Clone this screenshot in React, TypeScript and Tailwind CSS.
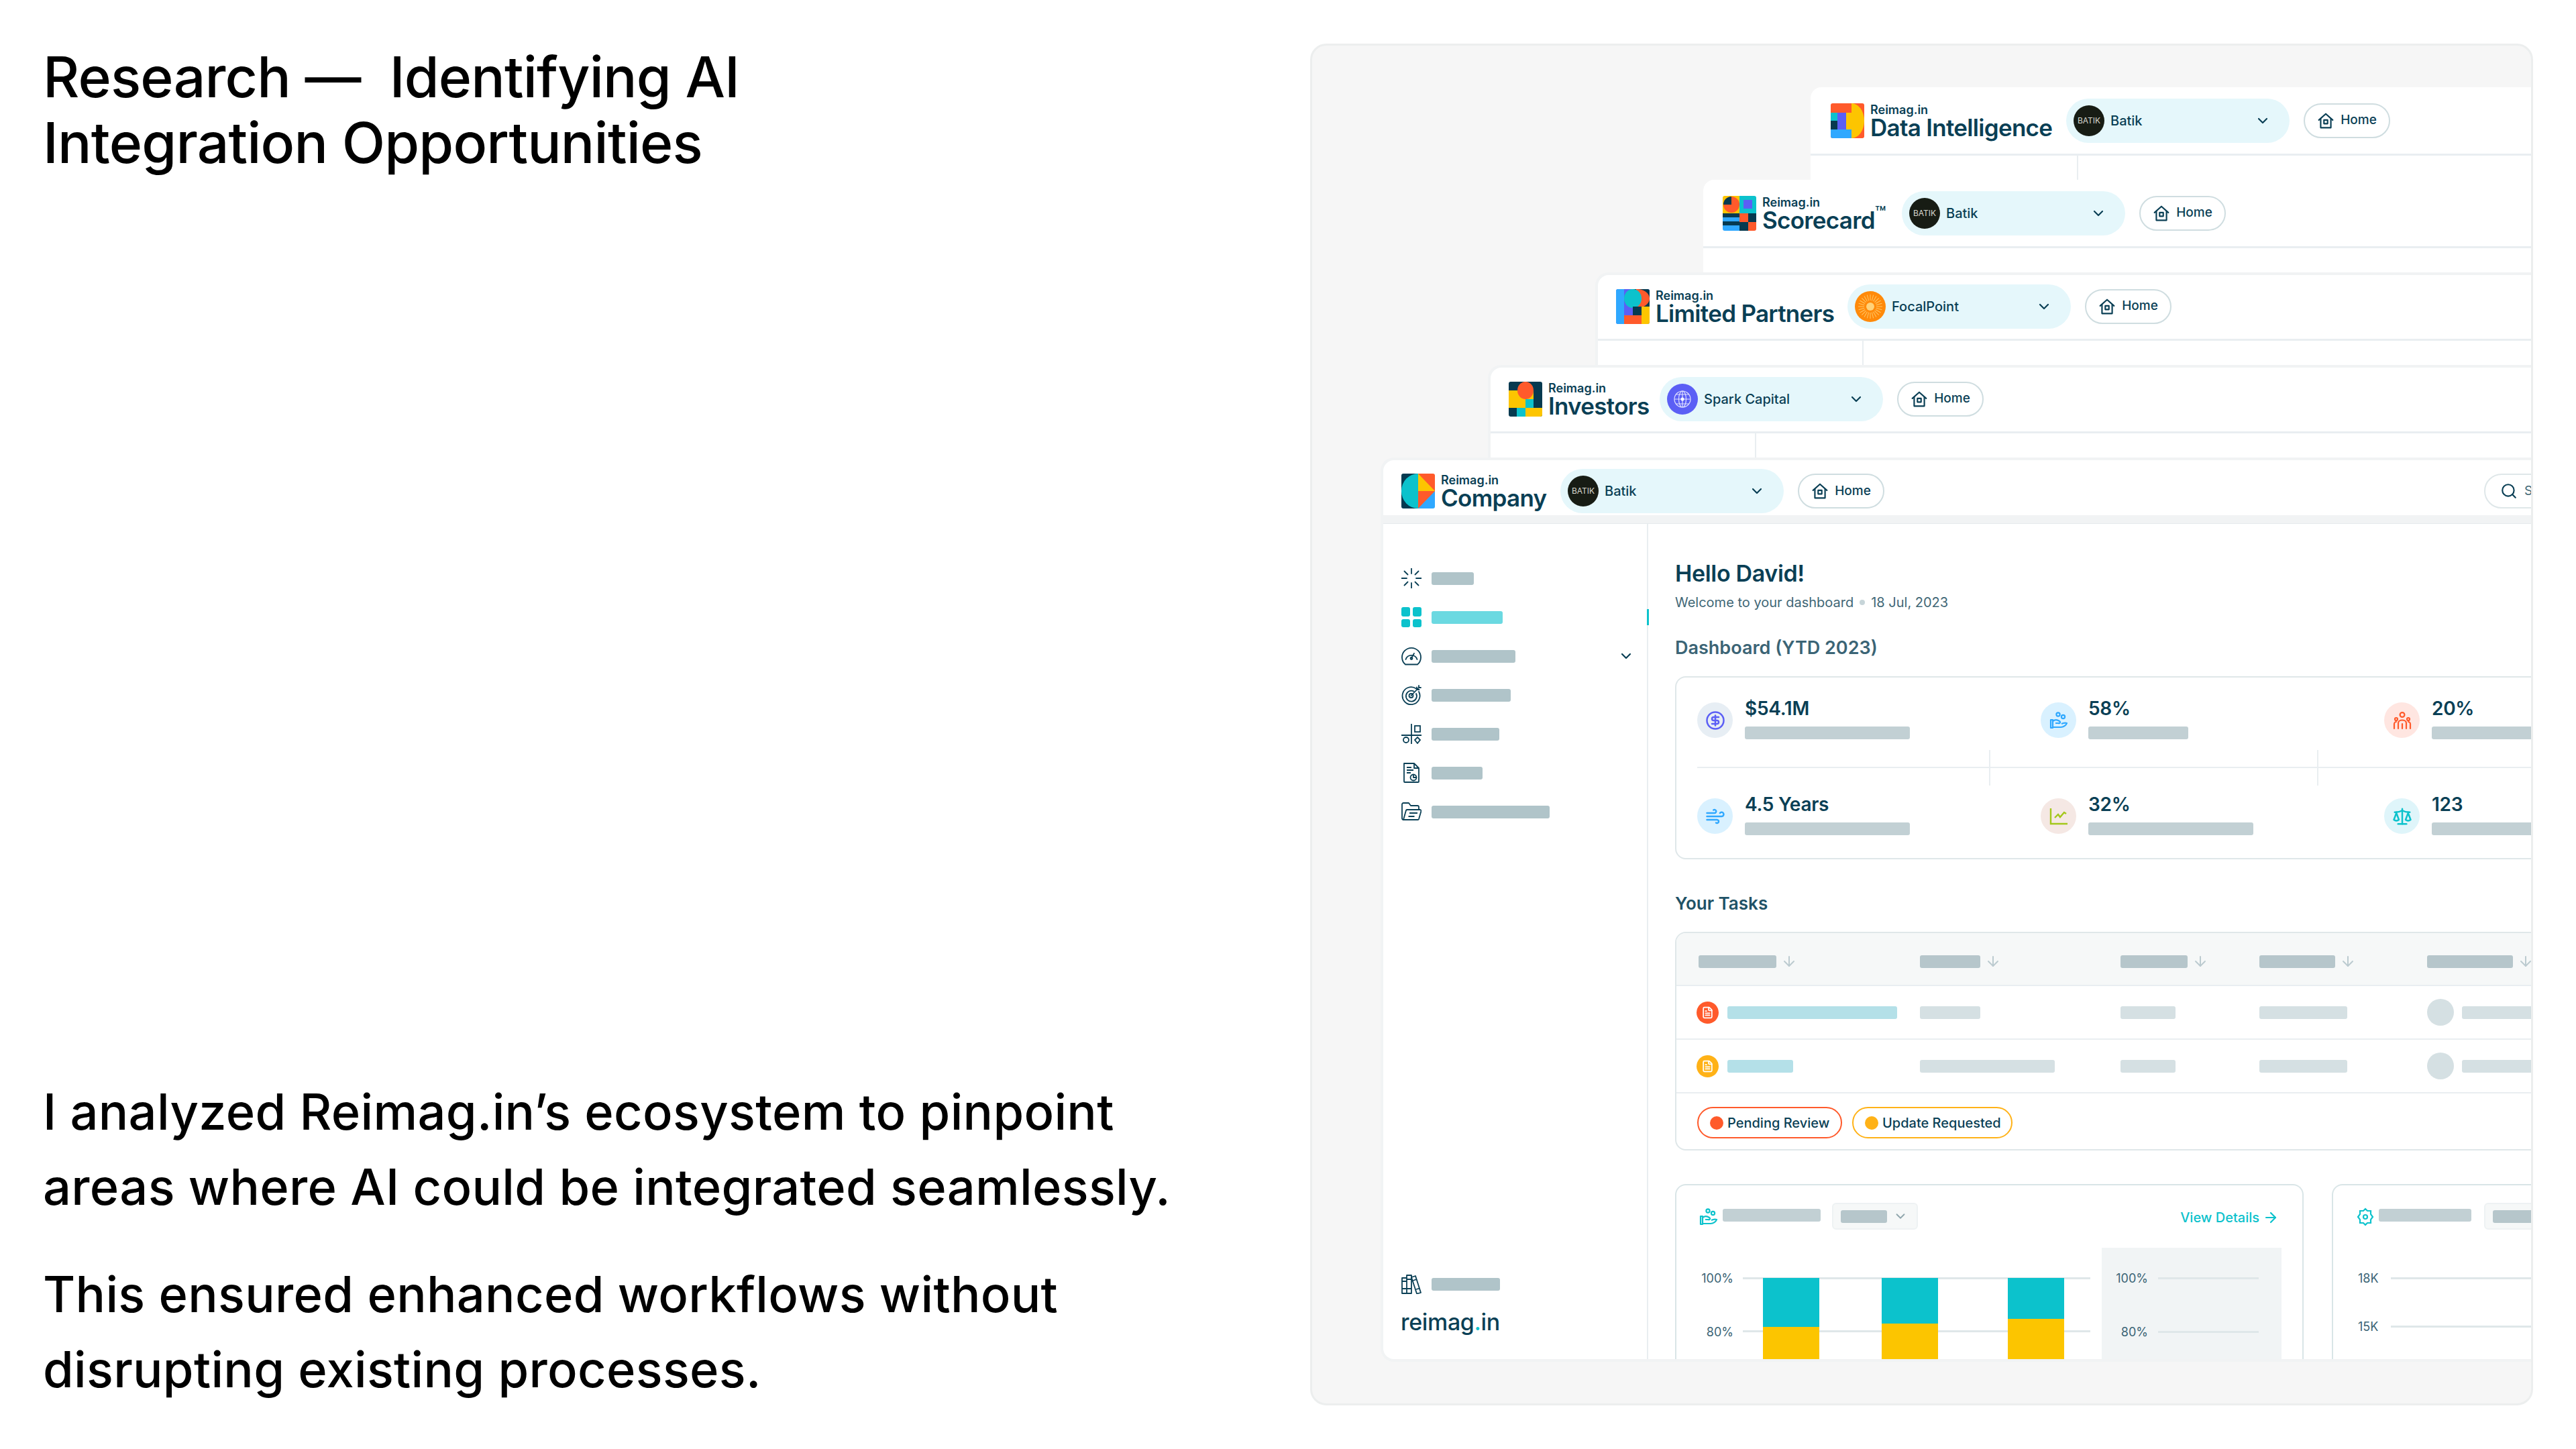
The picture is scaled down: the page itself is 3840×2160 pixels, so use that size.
import {
  ArrowDown,
  ArrowRight,
  ChevronDown,
  CircleDollarSign,
  FileText,
  Scale,
  Search,
  Wind,
} from 'lucide-react';
import type { ReactNode } from 'react';

function HomeIcon() {
  return (
    <svg viewBox="0 0 24 24" className="w-[26px] h-[26px]" fill="none" stroke="#0a3f55" strokeWidth="2" strokeLinejoin="round">
      <path d="M2.5 11 12 2.5 21.5 11" strokeLinecap="round" />
      <path d="M5 9v12.5h14V9" />
      <rect x="9.5" y="11" width="5" height="5" />
    </svg>
  );
}

function LogoData() {
  return (
    <svg viewBox="0 0 50 52" className="w-[50px] h-[52px] shrink-0 rounded-[3px]">
      <rect width="50" height="52" fill="#ff5a2b" />
      <rect x="0" y="14" width="10" height="12" fill="#0cc2cc" />
      <rect x="0" y="26" width="10" height="13" fill="#063a50" />
      <rect x="10" y="14" width="13" height="25" fill="#5b5ff5" />
      <rect x="0" y="39" width="31" height="13" fill="#2fa8ff" />
      <path d="M31 0a19 26 0 0 1 0 52z" fill="#fdc500" />
      <rect x="23" y="14" width="8" height="25" fill="#fdc500" />
    </svg>
  );
}

function LogoScorecard() {
  return (
    <svg viewBox="0 0 50 52" className="w-[50px] h-[52px] shrink-0 rounded-[3px]">
      <rect width="25" height="26" fill="#fdc500" />
      <circle cx="13" cy="13" r="12" fill="#ff5a2b" />
      <path d="M1 13A12 12 0 0 1 13 1v12z" fill="#063a50" />
      <rect x="25" width="25" height="26" fill="#0cc2cc" />
      <rect x="31" y="6" width="13" height="13" fill="#5b5ff5" />
      <rect y="26" width="25" height="6" fill="#063a50" />
      <rect y="32" width="25" height="6" fill="#2fa8ff" />
      <rect y="38" width="25" height="6" fill="#063a50" />
      <rect y="44" width="25" height="8" fill="#2fa8ff" />
      <rect x="25" y="26" width="13" height="13" fill="#ff5a2b" />
      <rect x="38" y="26" width="12" height="13" fill="#063a50" />
      <rect x="25" y="39" width="13" height="13" fill="#063a50" />
      <rect x="38" y="39" width="12" height="13" fill="#ff5a2b" />
    </svg>
  );
}

function LogoPartners() {
  return (
    <svg viewBox="0 0 50 52" className="w-[50px] h-[52px] shrink-0 rounded-[3px]">
      <rect width="50" height="52" fill="#5b5ff5" />
      <rect width="12" height="52" fill="#2fa8ff" />
      <path d="M25 0h25v26H25z" fill="#063a50" />
      <path d="M30 0a19 14 0 0 1 20 14 19 14 0 0 1-20 14z" fill="#ff5a2b" />
      <ellipse cx="25" cy="14" rx="13" ry="14" fill="#0cc2cc" />
      <rect x="25" y="26" width="13" height="13" fill="#063a50" />
      <rect x="12" y="39" width="26" height="13" fill="#ff5a2b" />
      <rect x="38" y="26" width="12" height="26" fill="#fdc500" />
    </svg>
  );
}

function LogoInvestors() {
  return (
    <svg viewBox="0 0 50 52" className="w-[50px] h-[52px] shrink-0 rounded-[3px]">
      <rect width="50" height="52" fill="#063a50" />
      <rect y="13" width="25" height="26" fill="#fdc500" />
      <rect x="25" y="13" width="12" height="26" fill="#fdc500" />
      <rect x="25" y="26" width="12" height="13" fill="#0cc2cc" />
      <ellipse cx="25" cy="13" rx="12" ry="13" fill="#ff5a2b" />
      <rect x="12" y="39" width="13" height="13" fill="#0cc2cc" />
      <rect x="25" y="39" width="25" height="13" fill="#fdc500" />
    </svg>
  );
}

function LogoCompany() {
  return (
    <svg viewBox="0 0 50 52" className="w-[50px] h-[52px] shrink-0 rounded-[3px]">
      <rect width="25" height="52" fill="#063a50" />
      <path d="M25 0a25 26 0 0 0 0 52z" fill="#0cc2cc" />
      <rect x="25" width="25" height="26" fill="#ff5a2b" />
      <path d="M25 0l25 26H25z" fill="#fdc500" />
      <rect x="25" y="26" width="25" height="26" fill="#2fa8ff" />
      <path d="M25 26h25L25 52z" fill="#ff5a2b" />
    </svg>
  );
}

function BatikAvatar() {
  return (
    <div className="w-[46px] h-[46px] shrink-0 rounded-full bg-[#171c14] flex items-center justify-center text-[12px] text-[#d8d8d0]">
      BATIK
    </div>
  );
}

function FocalAvatar() {
  const rays = Array.from({ length: 24 }, (_, i) => (i * 360) / 24);
  return (
    <svg viewBox="0 0 46 46" className="w-[46px] h-[46px] shrink-0">
      <circle cx="23" cy="23" r="23" fill="#ff8a0a" />
      {rays.map((a) => (
        <line key={a} x1="23" y1="14" x2="23" y2="5" stroke="#ffc766" strokeWidth="1" transform={`rotate(${a} 23 23)`} />
      ))}
      <circle cx="23" cy="23" r="6" fill="#ffd27a" />
    </svg>
  );
}

function SparkAvatar() {
  return (
    <svg viewBox="0 0 46 46" className="w-[46px] h-[46px] shrink-0" fill="none" stroke="#dfe0ff" strokeWidth="1.2">
      <circle cx="23" cy="23" r="23" fill="#5b5ff5" stroke="none" />
      <circle cx="23" cy="23" r="12" />
      <ellipse cx="23" cy="23" rx="5.5" ry="12" />
      <path d="M11 23h24M13 16h20M13 30h20M23 11v24" />
      <circle cx="23" cy="23" r="2.5" fill="#ffffff" stroke="none" />
    </svg>
  );
}

function Header({
  logo,
  title,
  titleClass,
  avatar,
  name,
  children,
}: {
  logo: ReactNode;
  title: ReactNode;
  titleClass: string;
  avatar: ReactNode;
  name: string;
  children?: ReactNode;
}) {
  return (
    <div className="flex items-center">
      {logo}
      <div className={`ml-[9px] shrink-0 whitespace-nowrap text-[#0a3f55] ${titleClass}`}>
        <div className="text-[18px] leading-[21px] font-semibold">Reimag.in</div>
        <div className="text-[35px] leading-[33px] font-semibold tracking-[-0.02em]">{title}</div>
      </div>
      <div className="ml-[20px] w-[333px] h-[66px] shrink-0 rounded-full bg-[#e5f7fb] flex items-center pl-[11px] pr-[28px]">
        {avatar}
        <span className="ml-[9px] text-[20px] font-medium text-[#0a3f55]">{name}</span>
        <ChevronDown className="ml-auto w-[24px] h-[24px] text-[#0a3f55]" strokeWidth={2.2} />
      </div>
      <div className="ml-[21px] w-[129px] h-[52px] shrink-0 rounded-full border-2 border-[#cfdde0] flex items-center justify-center gap-[9px]">
        <HomeIcon />
        <span className="text-[19px] font-medium text-[#0a3f55]">Home</span>
      </div>
      {children}
    </div>
  );
}

function Bar({ className }: { className: string }) {
  return <div className={`h-[19px] rounded-[3px] shrink-0 ${className}`} />;
}

function SunIcon() {
  return (
    <svg viewBox="0 0 30 30" className="w-[30px] h-[30px]" fill="none" stroke="#0a3f55" strokeWidth="1.8" strokeLinecap="round">
      <path d="M15 0v8M15 22v8M0 15h8M22 15h8M4.500 4.500l5 5M20.500 20.500l5 5M25.500 4.500l-5 5M9.500 20.500l-5 5" />
    </svg>
  );
}

function GridIcon() {
  return (
    <svg viewBox="0 0 30 30" className="w-[30px] h-[30px]" fill="#0cc2cc">
      <rect x="0" y="0" width="13" height="14" rx="3" />
      <rect x="17" y="0" width="13" height="14" rx="3" />
      <rect x="0" y="18" width="13" height="12" rx="3" />
      <rect x="17" y="18" width="13" height="12" rx="3" />
    </svg>
  );
}

function GaugeIcon() {
  return (
    <svg viewBox="0 0 30 30" className="w-[30px] h-[30px]" fill="none" stroke="#0a3f55" strokeWidth="1.8" strokeLinecap="round">
      <path d="M6 27.500A14 14 0 1 1 24 27.500z" strokeLinejoin="round" />
      <path d="M6.500 20A9 9 0 0 1 23.500 20" />
      <path d="M15 18l4-7" />
      <circle cx="15" cy="18.500" r="1.500" />
    </svg>
  );
}

function TargetIcon() {
  return (
    <svg viewBox="0 0 30 30" className="w-[30px] h-[30px]" fill="none" stroke="#0a3f55" strokeWidth="1.8" strokeLinecap="round">
      <path d="M22 5.500A13 13 0 1 0 26 10" />
      <path d="M18.500 9.500A8 8 0 1 0 22 13" />
      <circle cx="14.500" cy="16" r="3" />
      <path d="M14.500 16 26 4M23 3.500v3.500h3.500M26 1v3h3" />
    </svg>
  );
}

function ShapesIcon() {
  return (
    <svg viewBox="0 0 30 30" className="w-[30px] h-[30px]" fill="none" stroke="#0a3f55" strokeWidth="1.8">
      <path d="M0 17h30M15 0v30" />
      <rect x="20" y="3" width="8" height="9" />
      <circle cx="7" cy="24" r="4" />
      <path d="M24 20l4 4-4 5-4-5z" />
    </svg>
  );
}

function ReportIcon() {
  return (
    <svg viewBox="0 0 30 30" className="w-[30px] h-[30px]" fill="none" stroke="#0a3f55" strokeWidth="1.8" strokeLinejoin="round">
      <path d="M4 1h15l7 7v20a1 1 0 0 1-1 1H5a1 1 0 0 1-1-1z" />
      <path d="M19 1v7h7M8 7h7M8 11h10M8 15h6" />
      <circle cx="18" cy="22" r="4.500" />
      <path d="M18 17.500V22h4.500" />
    </svg>
  );
}

function FolderIcon() {
  return (
    <svg viewBox="0 0 30 30" className="w-[30px] h-[30px]" fill="none" stroke="#0a3f55" strokeWidth="1.8" strokeLinejoin="round">
      <path d="M3 27a2 2 0 0 1-2-2V4a2 2 0 0 1 2-2h8l3 4h10a2 2 0 0 1 2 2v4" />
      <path d="M3 27l4-14a2 2 0 0 1 2-1h19a2 2 0 0 1 1.500 2L26 26a1.500 1.500 0 0 1-1.500 1z" />
      <path d="M12 17h12M10.500 22h9" />
    </svg>
  );
}

function BooksIcon() {
  return (
    <svg viewBox="0 0 30 30" className="w-[30px] h-[30px]" fill="none" stroke="#0a3f55" strokeWidth="1.8" strokeLinejoin="round">
      <path d="M1 6h7v23H1zM8 2h7v27H8zM1 11h7M1 22h7M8 8h7M8 22h7" />
      <path d="M15 5l6-2 8 25-6 1.500z" />
      <path d="M17 10l6-2M22 23l5-1.500" />
    </svg>
  );
}

const sideItems = [
  { icon: <SunIcon />, bar: 'w-[63px] bg-[#b0c4c9]' },
  { icon: <GridIcon />, bar: 'w-[106px] bg-[#6bd9e1]', active: true },
  { icon: <GaugeIcon />, bar: 'w-[125px] bg-[#b0c4c9]', chevron: true },
  { icon: <TargetIcon />, bar: 'w-[118px] bg-[#b0c4c9]' },
  { icon: <ShapesIcon />, bar: 'w-[101px] bg-[#b0c4c9]' },
  { icon: <ReportIcon />, bar: 'w-[76px] bg-[#b0c4c9]' },
  { icon: <FolderIcon />, bar: 'w-[176px] bg-[#b0c4c9]' },
];

function Sidebar() {
  return (
    <div className="w-[395px] shrink-0 border-r-2 border-[#e9eef1] flex flex-col pl-[27px] pt-[52px] pb-[35px]">
      {sideItems.map((item) => (
        <div key={item.bar} className="relative h-[58px] flex items-center gap-[15px]">
          <div className="w-[30px] h-[30px] shrink-0">{item.icon}</div>
          <Bar className={item.bar} />
          {item.chevron && <ChevronDown className="absolute left-[323px] w-[24px] h-[24px] text-[#0a3f55]" strokeWidth={2.2} />}
          {item.active && <div className="absolute left-[366px] w-[3px] h-[24px] bg-[#0cc2cc]" />}
        </div>
      ))}
      <div className="mt-auto flex items-center gap-[15px]">
        <BooksIcon />
        <Bar className="w-[102px] bg-[#b0c4c9]" />
      </div>
      <div className="mt-[22px] -ml-[1px] text-[34px] leading-[40px] font-medium text-[#0a3f55] tracking-[-0.01em]">
        reimag<span className="text-[#0cc2cc]">.</span>in
      </div>
    </div>
  );
}

function HandIcon() {
  return (
    <svg viewBox="0 0 28 28" className="w-[28px] h-[28px]" fill="none" stroke="#2fa8ff" strokeWidth="2.2" strokeLinejoin="round">
      <circle cx="13" cy="5" r="2.600" />
      <circle cx="20.500" cy="8.500" r="2.600" />
      <path d="M2 13h3v12H2zM5 15c4-3 7-2 10 0 2 1 1 4-2 3h-4M5 24h12c4 0 8-3 9-6-3-1-6 0-8 1" />
    </svg>
  );
}

function PeopleIcon() {
  return (
    <svg viewBox="0 0 28 28" className="w-[28px] h-[28px]" fill="none" stroke="#ff5a2b" strokeWidth="2.2" strokeLinecap="round">
      <circle cx="14" cy="5.500" r="3.400" />
      <circle cx="5" cy="12" r="2" />
      <circle cx="23" cy="12" r="2" />
      <path d="M8 26v-8c0-6 12-6 12 0v8M14 19v7M2 26v-7c0-2 2-3 3-3M26 26v-7c0-2-2-3-3-3" />
    </svg>
  );
}

function GrowthIcon() {
  return (
    <svg viewBox="0 0 28 28" className="w-[28px] h-[28px]" fill="none" stroke="#a3c71a" strokeWidth="2.400">
      <path d="M2 2v23h25" />
      <path d="M8 16l5-5 3 4 6-7 3 2" />
    </svg>
  );
}

function Stat({ circle, icon, value, bar }: { circle: string; icon: ReactNode; value: string; bar: string }) {
  return (
    <div className="w-[512px] shrink-0 flex items-center gap-[18px]">
      <div className={`w-[53px] h-[53px] shrink-0 rounded-full flex items-center justify-center ${circle}`}>{icon}</div>
      <div>
        <div className="-mt-[2px] text-[28px] leading-[27px] font-semibold text-[#0a3f55] tracking-[-0.01em]">{value}</div>
        <Bar className={`mt-[13px] bg-[#c2d0d4] ${bar}`} />
      </div>
    </div>
  );
}

function StatsCard() {
  return (
    <div className="mt-[26px] w-[1400px] h-[273px] rounded-[16px] border-2 border-[#dfe7e9] pl-[31px] pt-[35px]">
      <div className="flex">
        <Stat circle="bg-[#e7eef4]" icon={<CircleDollarSign className="w-[30px] h-[30px] text-[#5b5ff5]" strokeWidth={2} />} value="$54.1M" bar="w-[246px]" />
        <Stat circle="bg-[#d9f1ff]" icon={<HandIcon />} value="58%" bar="w-[149px]" />
        <Stat circle="bg-[#ffe6e1]" icon={<PeopleIcon />} value="20%" bar="w-[246px]" />
      </div>
      <div className="relative mt-[16px] h-[53px] flex">
        <div className="absolute left-0 right-0 top-[25px] h-[2px] bg-[#e9eef1]" />
        <div className="w-[437px] h-full border-r-2 border-[#e9eef1]" />
        <div className="w-[489px] h-full border-r-2 border-[#e9eef1]" />
      </div>
      <div className="flex mt-[17px]">
        <Stat circle="bg-[#d9f1ff]" icon={<Wind className="w-[30px] h-[30px] text-[#2fa8ff]" strokeWidth={2} />} value="4.5 Years" bar="w-[246px]" />
        <Stat circle="bg-[#f5e8e4]" icon={<GrowthIcon />} value="32%" bar="w-[246px]" />
        <Stat circle="bg-[#dff5fa]" icon={<Scale className="w-[30px] h-[30px] text-[#0cc2cc]" strokeWidth={2} />} value="123" bar="w-[246px]" />
      </div>
    </div>
  );
}

const headCols = ['w-[116px]', 'w-[90px]', 'w-[100px]', 'w-[113px]', 'w-[128px]'];

function TaskRow({ color, first, second }: { color: string; first: string; second: string }) {
  return (
    <div className="h-[80px] border-b-2 border-[#e9eef1] grid grid-cols-[330px_299px_207px_250px_300px] items-center pl-[33px]">
      <div className="flex items-center -ml-[3px] gap-[13px]">
        <div className={`w-[33px] h-[33px] rounded-full flex items-center justify-center ${color}`}>
          <FileText className="w-[19px] h-[19px] text-white" strokeWidth={2.2} />
        </div>
        <Bar className={`bg-[#b4e0e8] ${first}`} />
      </div>
      <Bar className={`bg-[#d5e0e3] ${second}`} />
      <Bar className="bg-[#d5e0e3] w-[82px]" />
      <Bar className="bg-[#d5e0e3] w-[131px]" />
      <div className="flex items-center gap-[12px]">
        <div className="w-[40px] h-[40px] rounded-full bg-[#d5e0e3]" />
        <Bar className="bg-[#d5e0e3] w-[200px]" />
      </div>
    </div>
  );
}

function TasksTable() {
  return (
    <div className="mt-[26px] w-[1400px] h-[326px] rounded-[16px] border-2 border-[#dfe7e9] overflow-hidden">
      <div className="h-[79px] pt-[7px] bg-[#f6f8f8] border-b-2 border-[#e9eef1] grid grid-cols-[330px_299px_207px_250px_300px] items-center pl-[33px]">
        {headCols.map((w) => (
          <div key={w} className="flex items-center gap-[7px]">
            <Bar className={`bg-[#b6c6cb] ${w}`} />
            <ArrowDown className="w-[24px] h-[24px] text-[#bccbd0]" strokeWidth={2} />
          </div>
        ))}
      </div>
      <TaskRow color="bg-[#ff5a2b]" first="w-[253px]" second="w-[90px]" />
      <TaskRow color="bg-[#ffb217]" first="w-[98px]" second="w-[201px]" />
      <div className="flex gap-[15px] pl-[31px] pt-[20px]">
        <div className="w-[216px] h-[47px] rounded-full border-2 border-[#ff5a2b] flex items-center pl-[17px] gap-[6px]">
          <span className="w-[20px] h-[20px] rounded-full bg-[#ff5a2b]" />
          <span className="text-[20px] font-medium text-[#0a3f55]">Pending Review</span>
        </div>
        <div className="w-[239px] h-[47px] rounded-full border-2 border-[#ffb217] flex items-center pl-[17px] gap-[6px]">
          <span className="w-[20px] h-[20px] rounded-full bg-[#ffb217]" />
          <span className="text-[20px] font-medium text-[#0a3f55]">Update Requested</span>
        </div>
      </div>
    </div>
  );
}

function Dropdown() {
  return (
    <div className="w-[128px] h-[40px] shrink-0 rounded-[6px] border-2 border-[#eef2f3] bg-[#f6f8f8] flex items-center pl-[11px] gap-[9px]">
      <Bar className="w-[69px] bg-[#b6c6cb]" />
      <ChevronDown className="w-[22px] h-[22px] text-[#8fa5ac]" strokeWidth={2} />
    </div>
  );
}

function ChartCards() {
  return (
    <div className="mt-[50px] flex gap-[42px] w-[1500px]">
      <div className="w-[937px] h-[320px] shrink-0 rounded-t-[16px] border-2 border-b-0 border-[#d9e5e7]">
        <div className="flex pl-[34px] pr-[35px] pt-[26px]">
          <svg viewBox="0 0 28 28" className="w-[28px] h-[28px] mt-[7px]" fill="none" stroke="#0cc2cc" strokeWidth="2.2" strokeLinejoin="round">
            <circle cx="13" cy="5" r="2.600" />
            <circle cx="20.500" cy="8.500" r="2.600" />
            <path d="M2 13h3v12H2zM5 15c4-3 7-2 10 0 2 1 1 4-2 3h-4M5 24h12c4 0 8-3 9-6-3-1-6 0-8 1" />
          </svg>
          <Bar className="w-[146px] ml-[7px] mt-[9px] bg-[#c2d0d4]" />
          <div className="ml-[17px]">
            <Dropdown />
          </div>
          <div className="ml-auto mt-[10px] h-[24px] flex items-center gap-[5px] text-[#0cc2cc]">
            <span className="text-[20px] font-medium">View Details</span>
            <ArrowRight className="w-[24px] h-[24px]" strokeWidth={2.2} />
          </div>
        </div>
        <div className="mt-[27px] flex">
          <div className="w-[85px] shrink-0 pt-[34px] text-right text-[18px] leading-[24px] text-[#3b6475]">
            <div className="h-[80px]">100%</div>
            <div>80%</div>
          </div>
          <svg viewBox="0 0 518 200" className="ml-[14px] w-[518px] h-[200px] shrink-0">
            <rect x="0" y="44" width="518" height="3" fill="#dfe7e9" />
            <rect x="0" y="123" width="518" height="3" fill="#dfe7e9" />
            <rect x="30" y="45" width="84" height="73" fill="#0cc2cc" />
            <rect x="30" y="118" width="84" height="82" fill="#fcc500" />
            <rect x="207" y="45" width="84" height="68" fill="#0cc2cc" />
            <rect x="207" y="113" width="84" height="87" fill="#fcc500" />
            <rect x="395" y="45" width="84" height="61" fill="#0cc2cc" />
            <rect x="395" y="106" width="84" height="94" fill="#fcc500" />
          </svg>
          <div className="ml-[17px] w-[268px] h-[200px] shrink-0 bg-[#f1f4f5] pt-[34px] text-[18px] leading-[24px] text-[#3b6475]">
            <div className="flex h-[80px] items-start">
              <span className="w-[69px] text-right">100%</span>
              <div className="ml-[15px] mt-[10px] w-[150px] h-[3px] bg-[#dfe7e9]" />
            </div>
            <div className="flex items-start">
              <span className="w-[69px] text-right">80%</span>
              <div className="ml-[15px] mt-[10px] w-[150px] h-[3px] bg-[#dfe7e9]" />
            </div>
          </div>
        </div>
      </div>
      <div className="w-[500px] h-[320px] shrink-0 rounded-t-[16px] border-2 border-b-0 border-[#d9e5e7]">
        <div className="flex pl-[34px] pt-[26px]">
          <svg viewBox="0 0 28 28" className="w-[28px] h-[28px] mt-[7px]" fill="none" stroke="#0cc2cc" strokeWidth="2.2">
            <path d="M14 2l3 3h5v5l3 4-3 4v5h-5l-3 3-3-3H6v-5l-3-4 3-4V5h5z" />
            <circle cx="14" cy="14" r="3" />
          </svg>
          <Bar className="w-[138px] ml-[6px] mt-[9px] bg-[#c2d0d4]" />
          <div className="ml-[19px]">
            <Dropdown />
          </div>
        </div>
        <div className="mt-[61px] pl-[37px] text-[18px] leading-[24px] text-[#3b6475]">
          <div className="flex items-start h-[72px]">
            <span className="w-[49px]">18K</span>
            <div className="mt-[10px] w-[400px] h-[3px] bg-[#dfe7e9]" />
          </div>
          <div className="flex items-start">
            <span className="w-[49px]">15K</span>
            <div className="mt-[10px] w-[400px] h-[3px] bg-[#dfe7e9]" />
          </div>
        </div>
      </div>
    </div>
  );
}

function Dashboard() {
  return (
    <div className="flex-1 min-w-0 pl-[40px] pt-[54px] overflow-hidden">
      <div className="text-[34px] leading-[40px] font-semibold text-[#0a3f55] tracking-[-0.01em]">Hello David!</div>
      <div className="mt-[10px] flex items-center text-[20px] leading-[26px] text-[#3f6776]">
        <span>Welcome to your dashboard</span>
        <span className="mx-[9px] w-[8px] h-[8px] rounded-full bg-[#c7d5d9]" />
        <span>18 Jul, 2023</span>
      </div>
      <div className="mt-[39px] text-[27px] leading-[32px] font-semibold text-[#3b6475]">Dashboard (YTD 2023)</div>
      <StatsCard />
      <div className="mt-[50px] text-[26px] leading-[32px] font-semibold text-[#1f5266]">Your Tasks</div>
      <TasksTable />
      <ChartCards />
    </div>
  );
}

export default function App() {
  return (
    <div className="w-[3840px] h-[2160px] bg-white flex font-[Inter,sans-serif] text-black overflow-hidden">
      {/* Left copy */}
      <div className="w-[1953px] shrink-0 flex flex-col justify-between pl-[64px] pt-[66px] pb-[63px]">
        <h1 className="text-[84px] leading-[98px] font-medium tracking-[-0.01em] whitespace-pre">
          {'Research —  Identifying AI\nIntegration Opportunities'}
        </h1>
        <div className="text-[74px] leading-[112px] font-medium tracking-[0.004em]">
          <p className="whitespace-pre">{'I analyzed Reimag.in’s ecosystem to pinpoint\nareas where AI could be integrated seamlessly.'}</p>
          <p className="mt-[48px] whitespace-pre">{'This ensured enhanced workflows without\ndisrupting existing processes.'}</p>
        </div>
      </div>

      {/* Stacked product windows */}
      <div className="mt-[65px] w-[1823px] h-[2030px] rounded-[24px] border-[3px] border-[#eceeee] bg-[#f6f6f6] overflow-hidden pt-[62px]">
        <div className="ml-[743px] h-[138px] bg-white rounded-tl-[16px] flex flex-col">
          <div className="h-[102px] shrink-0 pl-[30px] flex items-center border-b-[3px] border-[#e9eef1]">
            <Header logo={<LogoData />} title="Data Intelligence" titleClass="w-[272px]" avatar={<BatikAvatar />} name="Batik" />
          </div>
          <div className="flex-1 ml-[397px] border-l-2 border-[#e9eef1]" />
        </div>

        <div className="ml-[583px] h-[138px] bg-white rounded-tl-[16px] flex flex-col">
          <div className="h-[102px] shrink-0 pl-[29px] flex items-center border-b-[3px] border-[#e9eef1]">
            <Header
              logo={<LogoScorecard />}
              title={
                <>
                  Scorecard<sup className="text-[27px] font-medium">™</sup>
                </>
              }
              titleClass="w-[188px]"
              avatar={<BatikAvatar />}
              name="Batik"
            />
          </div>
        </div>

        <div className="ml-[422px] h-[138px] bg-white rounded-tl-[20px] border-t-4 border-l-4 border-[#f1f3f4] flex flex-col">
          <div className="h-[98px] shrink-0 pl-[27px] pb-[2px] flex items-center border-b-[3px] border-[#e9eef1]">
            <Header logo={<LogoPartners />} title="Limited Partners" titleClass="w-[266px]" avatar={<FocalAvatar />} name="FocalPoint" />
          </div>
          <div className="flex-1 ml-[394px] border-l-2 border-[#e9eef1]" />
        </div>

        <div className="ml-[262px] h-[138px] bg-white rounded-tl-[20px] border-t-4 border-l-4 border-[#f1f3f4] flex flex-col">
          <div className="h-[98px] shrink-0 pl-[27px] pb-[2px] flex items-center border-b-[3px] border-[#e9eef1]">
            <Header logo={<LogoInvestors />} title="Investors" titleClass="w-[146px]" avatar={<SparkAvatar />} name="Spark Capital" />
          </div>
          <div className="flex-1 ml-[394px] border-l-2 border-[#e9eef1]" />
        </div>

        <div className="ml-[102px] h-[1348px] bg-white rounded-l-[20px] border-4 border-r-0 border-[#f1f3f4] flex flex-col overflow-hidden">
          <div className="h-[82px] shrink-0 pl-[27px] pt-[10px] flex items-center">
            <Header logo={<LogoCompany />} title="Company" titleClass="w-[158px]" avatar={<BatikAvatar />} name="Batik">
              <div className="ml-[894px] w-[200px] h-[52px] shrink-0 rounded-full border-2 border-[#dfe7e9] flex items-center pl-[22px] gap-[10px]">
                <Search className="w-[26px] h-[26px] text-[#0a3f55]" strokeWidth={2} />
                <span className="text-[19px] text-[#3f6776]">Search</span>
              </div>
            </Header>
          </div>
          <div className="h-[13px] shrink-0 bg-[#f1f3f4] border-b border-[#e5eaec]" />
          <div className="flex-1 min-h-0 flex">
            <Sidebar />
            <Dashboard />
          </div>
        </div>
      </div>
    </div>
  );
}
